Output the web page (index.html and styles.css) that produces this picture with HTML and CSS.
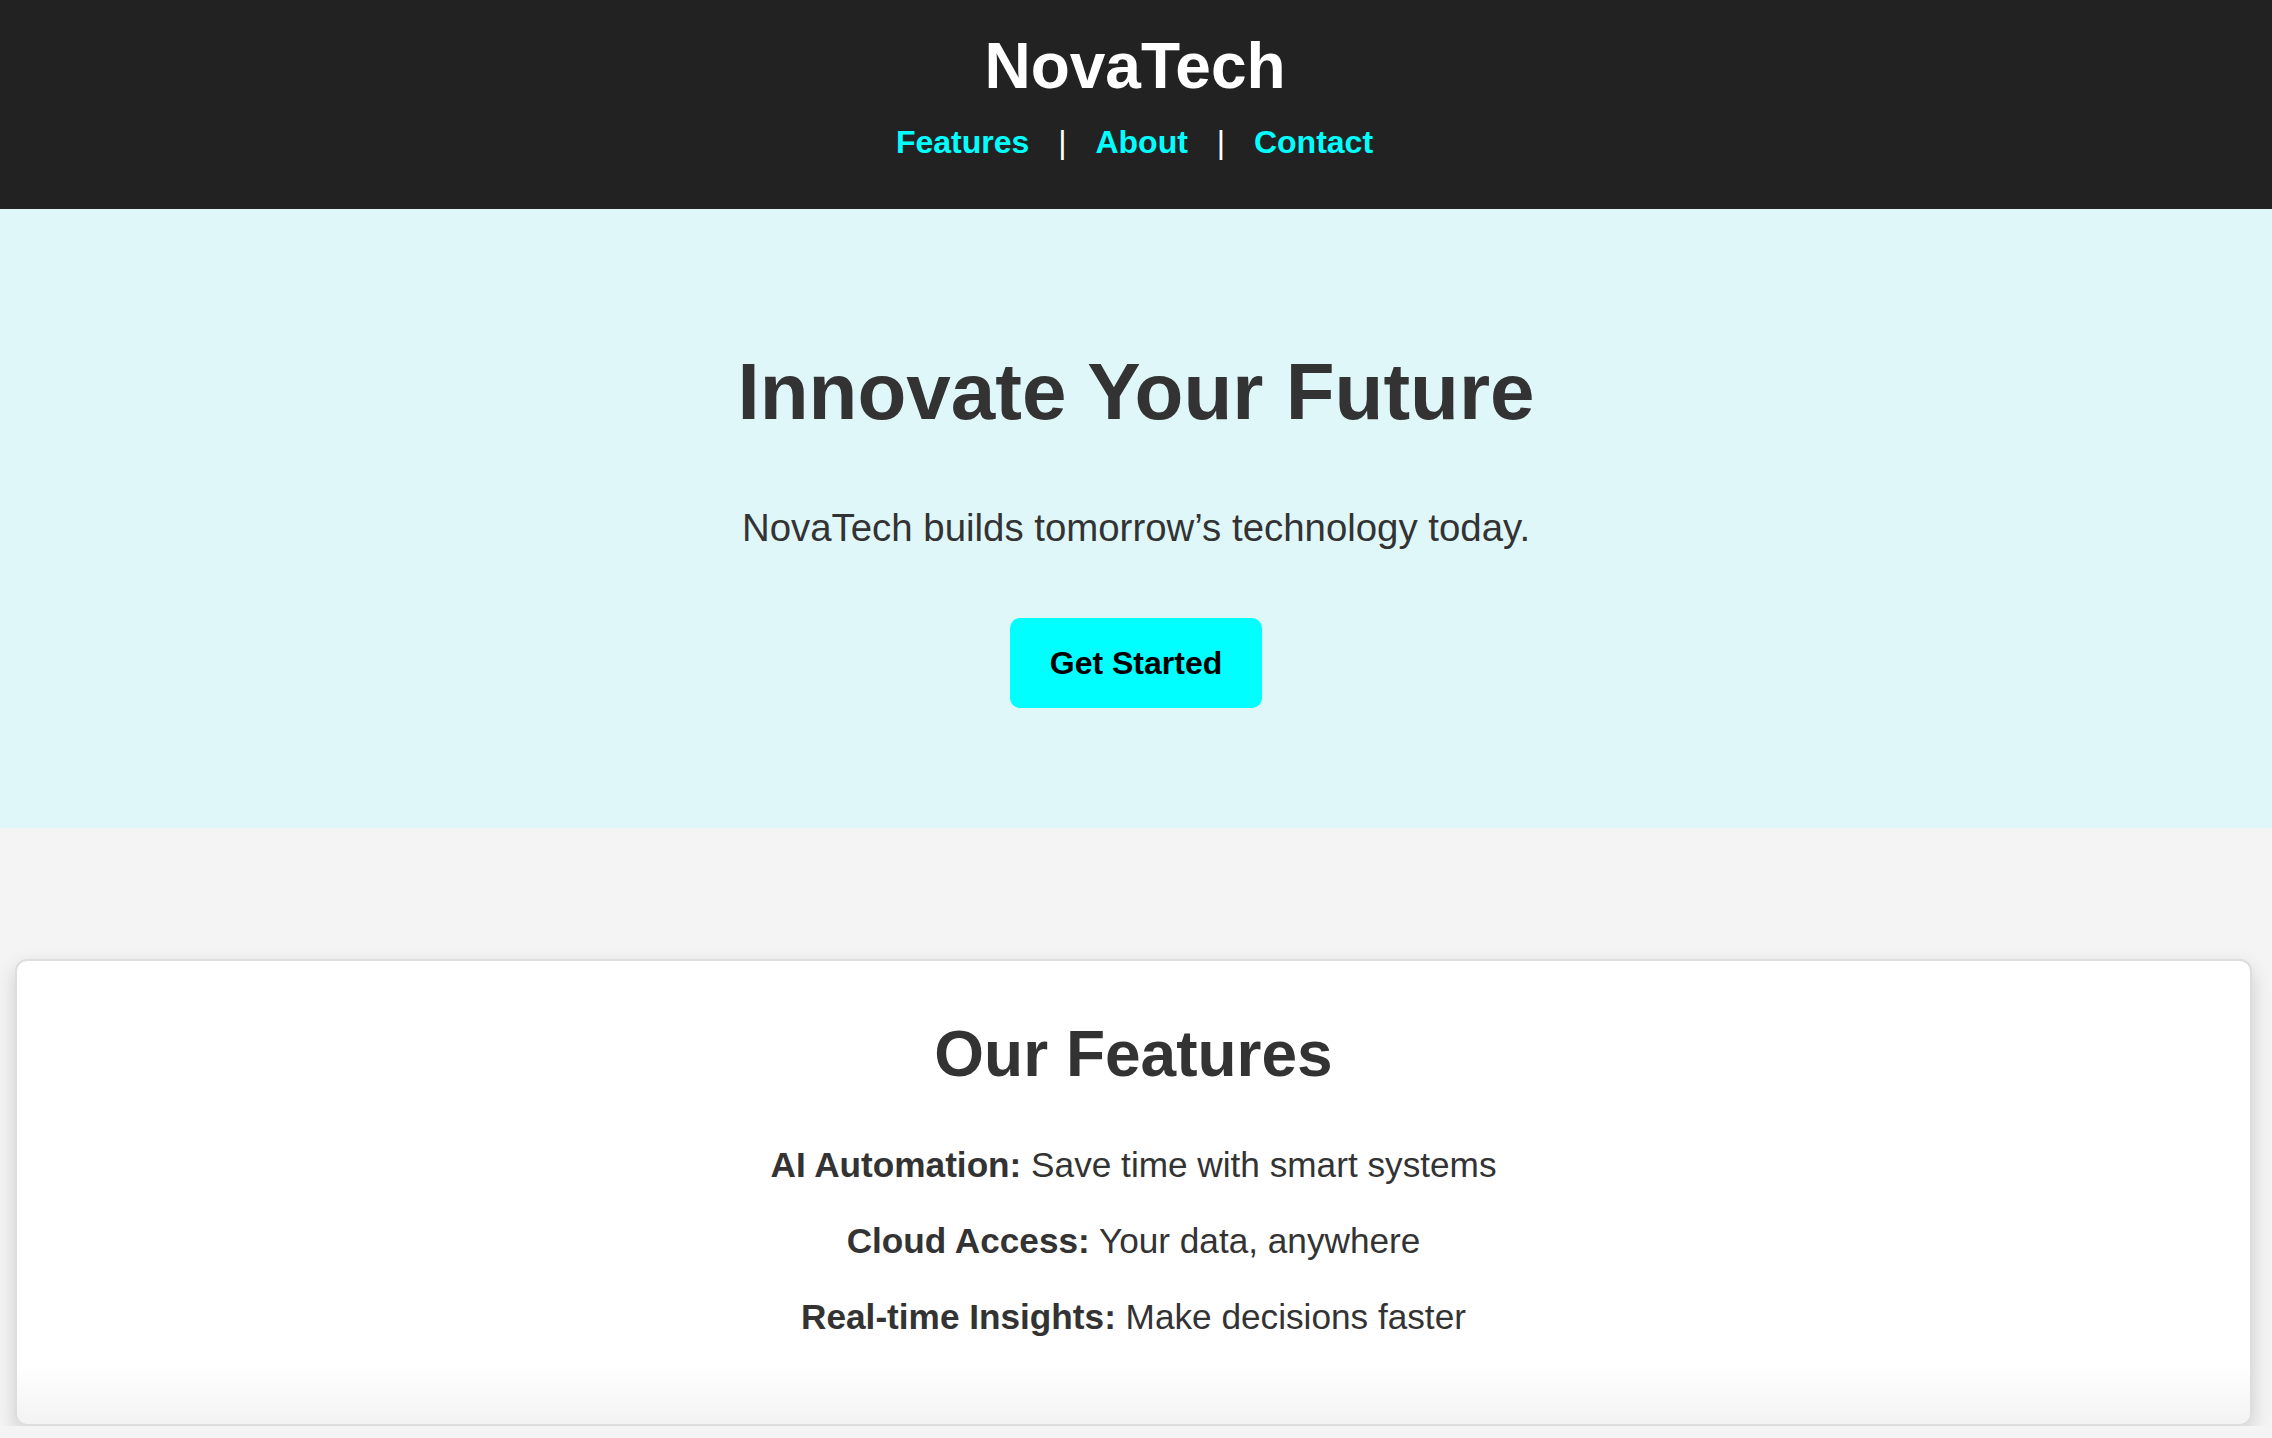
FILE: index.html
```html
<!DOCTYPE html>
<html lang="en">
<head>
<meta charset="utf-8">
<title>NovaTech</title>
<link rel="stylesheet" href="styles.css">
</head>
<body>
<header class="site-header">
  <h1 class="brand">NovaTech</h1>
  <nav class="nav"><a class="nav-link" href="#features">Features</a> | <a class="nav-link" href="#about">About</a> | <a class="nav-link" href="#contact">Contact</a></nav>
</header>
<section class="hero">
  <h2 class="hero-title">Innovate Your Future</h2>
  <p class="hero-text">NovaTech builds tomorrow’s technology today.</p>
  <a class="btn" href="#features">Get Started</a>
</section>
<main class="features" id="features">
  <div class="card">
    <h2 class="card-title">Our Features</h2>
    <p class="feature"><strong>AI Automation:</strong> Save time with smart systems</p>
    <p class="feature"><strong>Cloud Access:</strong> Your data, anywhere</p>
    <p class="feature"><strong>Real-time Insights:</strong> Make decisions faster</p>
  </div>
</main>
</body>
</html>
```

FILE: styles.css
```css
html, body {
  margin: 0;
  padding: 0;
}
body {
  background: #f4f4f4;
  color: #333;
  font-family: "Liberation Sans", Arial, sans-serif;
  font-size: 32px;
  overflow: hidden;
}
.site-header {
  background: #222;
  color: #fff;
  text-align: center;
  padding: 29px 0 48px;
}
.brand {
  margin: 0 0 0 -2px;
  font-size: 64px;
  font-weight: bold;
  line-height: normal;
}
.nav {
  margin: 21px 0 0 -3px;
  font-size: 32px;
  color: #fff;
}
.nav-link {
  color: #00ffff;
  font-weight: bold;
  text-decoration: none;
  margin: 0 20px;
}
.hero {
  background: #e0f7fa;
  display: flex;
  flex-direction: column;
  align-items: center;
  text-align: center;
  padding: 137px 0 120px;
}
.hero-title {
  margin: 0;
  font-size: 80px;
  font-weight: bold;
  line-height: normal;
  color: #333;
}
.hero-text {
  margin: 68px 0 0;
  font-size: 38.4px;
  line-height: normal;
  color: #333;
}
.btn {
  margin-top: 68px;
  display: inline-block;
  background: #00ffff;
  color: #000;
  font-weight: bold;
  font-size: 32px;
  text-decoration: none;
  padding: 26.6px 40px;
  border-radius: 10px;
  line-height: normal;
}
.features {
  padding-top: 131px;
}
.card {
  margin: 0 20px 0 15px;
  background: linear-gradient(to bottom, #fff calc(100% - 60px), #f3f3f3);
  border: 2px solid #ddd;
  border-radius: 12px;
  box-shadow: 0 8px 20px rgba(0, 0, 0, 0.16);
  text-align: center;
  padding: 56px 40px 87px;
}
.card-title {
  margin: 0 0 54px;
  font-size: 64px;
  font-weight: bold;
  line-height: normal;
  color: #333;
}
.feature {
  margin: 36px 0 0;
  font-size: 35.2px;
  line-height: normal;
  color: #333;
}
.card-title + .feature {
  margin-top: 0;
}
```
